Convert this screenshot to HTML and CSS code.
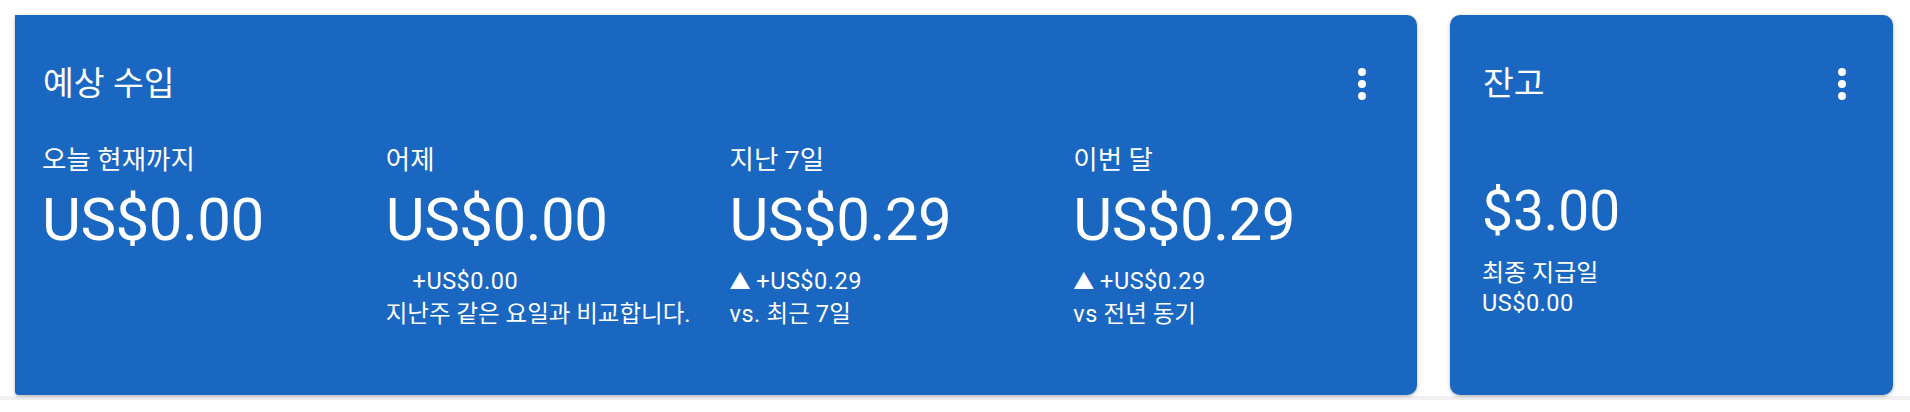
FILE: index.html
```html
<!DOCTYPE html>
<html lang="ko">
<head>
    <meta charset="UTF-8">
    <meta name="viewport" content="width=device-width, initial-scale=1.0">
    <title>예상 수입</title>
    <link rel="stylesheet" href="styles.css">
</head>
<body>
    <div class="board">
        <section class="card earnings">
            <div class="card-head">
                <h2 class="card-title">예상 수입</h2>
                <button class="more" type="button" aria-label="더보기">
                    <svg width="48" height="48" viewBox="0 0 48 48"><circle cx="24" cy="12" r="4"/><circle cx="24" cy="24" r="4"/><circle cx="24" cy="36" r="4"/></svg>
                </button>
            </div>
            <div class="stats">
                <div class="stat">
                    <div class="stat-label">오늘 현재까지</div>
                    <div class="stat-value">US$0.00</div>
                </div>
                <div class="stat">
                    <div class="stat-label">어제</div>
                    <div class="stat-value">US$0.00</div>
                    <div class="stat-note"><span class="arrow hidden">▲</span> <span class="num">+US$0.00</span></div>
                    <div class="stat-note">지난주 같은 요일과 비교합니다.</div>
                </div>
                <div class="stat">
                    <div class="stat-label">지난 7일</div>
                    <div class="stat-value">US$0.29</div>
                    <div class="stat-note"><span class="arrow">▲</span> <span class="num">+US$0.29</span></div>
                    <div class="stat-note"><span class="num">vs.</span> 최근 <span class="num">7</span>일</div>
                </div>
                <div class="stat">
                    <div class="stat-label">이번 달</div>
                    <div class="stat-value">US$0.29</div>
                    <div class="stat-note"><span class="arrow">▲</span> <span class="num">+US$0.29</span></div>
                    <div class="stat-note"><span class="num">vs</span> 전년 동기</div>
                </div>
            </div>
        </section>

        <section class="card balance">
            <div class="card-head">
                <h2 class="card-title">잔고</h2>
                <button class="more" type="button" aria-label="더보기">
                    <svg width="48" height="48" viewBox="0 0 48 48"><circle cx="24" cy="12" r="4"/><circle cx="24" cy="24" r="4"/><circle cx="24" cy="36" r="4"/></svg>
                </button>
            </div>
            <div class="balance-value">$3.00</div>
            <div class="balance-note">최종 지급일</div>
            <div class="balance-note"><span class="num">US$0.00</span></div>
        </section>
    </div>
</body>
</html>
```

FILE: styles.css
```css
body {
    margin: 0;
    background: #fff;
    font-family: Roboto, "Noto Sans CJK KR", sans-serif;
    color: #fff;
}
.board {
    display: flex;
    align-items: flex-start;
    gap: 33px;
    padding: 15px 17px 1px 15px;
    border-bottom: 4px solid #f1f1f1;
}
.card {
    height: 380px;
    box-sizing: border-box;
    background: #1967c1;
    box-shadow: 0 1px 3px rgba(0, 0, 0, 0.25), 0 2px 6px rgba(0, 0, 0, 0.08);
}
.earnings {
    width: 1402px;
    flex: none;
    border-radius: 0 10px 10px 4px;
    padding: 0 0 0 27px;
}
.balance {
    flex: 1;
    border-radius: 10px;
    padding: 0 0 0 32px;
}
.card-head {
    display: flex;
    justify-content: space-between;
    align-items: flex-start;
    padding-top: 45px;
}
.earnings .card-head {
    padding-right: 31px;
}
.balance .card-head {
    padding-right: 27px;
}
.card-title {
    margin: 4px 0 0 1px;
    font-size: 33.5px;
    line-height: 40px;
    font-weight: 400;
}
.more {
    width: 48px;
    height: 48px;
    padding: 0;
    border: none;
    background: none;
    fill: #fff;
    cursor: pointer;
}
.more svg {
    display: block;
}
.stats {
    display: grid;
    grid-template-columns: repeat(4, 1fr);
    margin-top: 35px;
}
.stat-label {
    font-size: 26.5px;
    line-height: 34px;
}
.stat-value {
    margin-top: 7px;
    font-size: 60px;
    line-height: 72px;
    letter-spacing: -0.5px;
}
.stat-value + .stat-note {
    margin-top: 9px;
}
.stat-note {
    font-size: 23.5px;
    line-height: 32px;
}
.num {
    letter-spacing: 0.5px;
}
.arrow {
    font-size: 21px;
}
.hidden {
    visibility: hidden;
}
.balance-value {
    margin-top: 70px;
    font-size: 55px;
    line-height: 66px;
}
.balance-note {
    font-size: 24px;
    line-height: 30px;
}
.balance-value + .balance-note {
    margin-top: 14px;
}
.balance-note .num {
    font-size: 23.5px;
}
```
